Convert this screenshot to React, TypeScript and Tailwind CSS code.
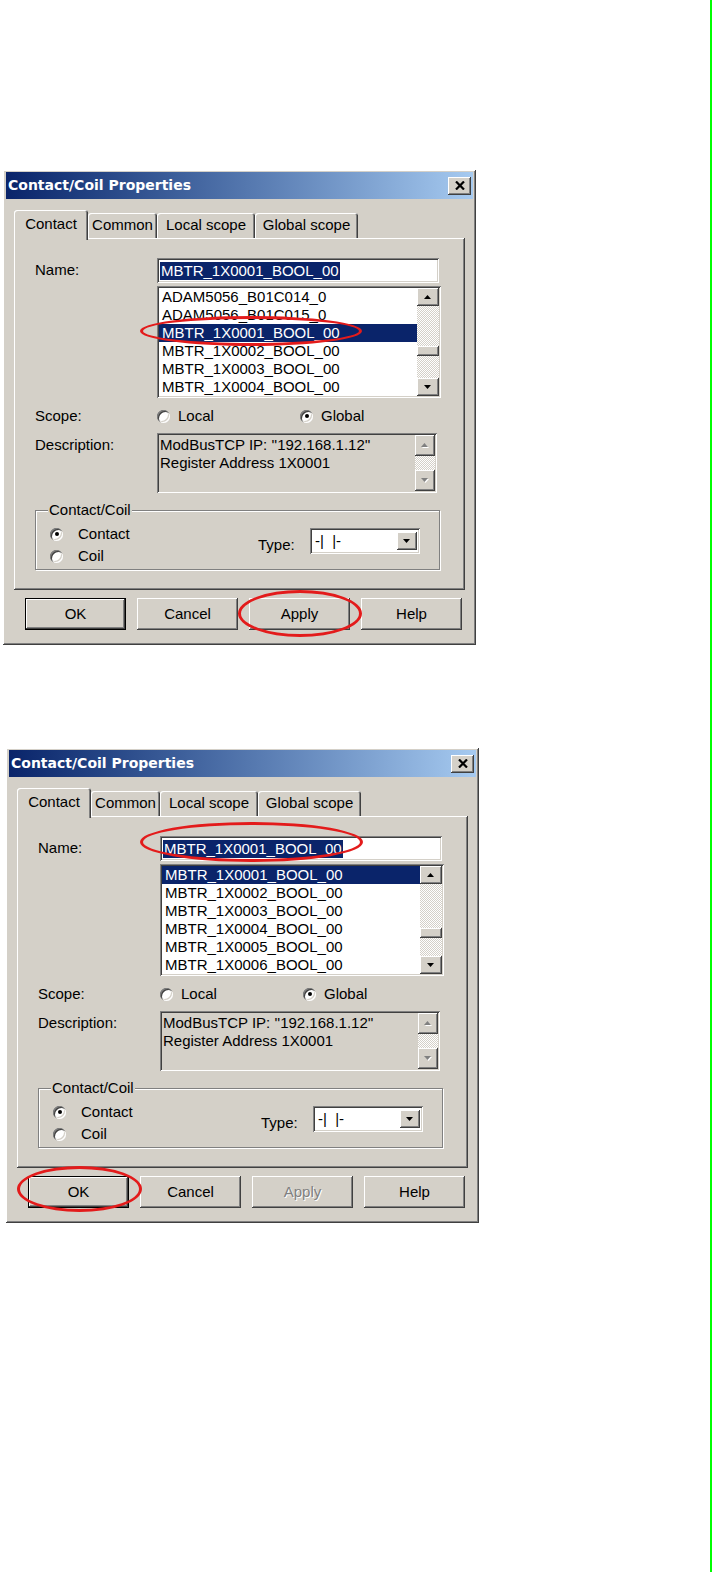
import React from "react";

// Win2000-style 3D edges
const raised =
  "shadow-[inset_-1px_-1px_0_#404040,inset_1px_1px_0_#ffffff,inset_-2px_-2px_0_#808080,inset_2px_2px_0_#d4d0c8]";
const sunken =
  "shadow-[inset_1px_1px_0_#808080,inset_-1px_-1px_0_#ffffff,inset_2px_2px_0_#404040,inset_-2px_-2px_0_#d4d0c8]";
const dither =
  "bg-[repeating-conic-gradient(#ffffff_0_25%,#d4d0c8_0_50%)] bg-[length:2px_2px]";

function Arrow({ dir, disabled }: { dir: "up" | "down"; disabled?: boolean }) {
  const pts = dir === "up" ? "3.5,0 7,4 0,4" : "0,0 7,0 3.5,4";
  return (
    <div className={`flex items-center justify-center bg-[#d4d0c8] ${raised} h-full w-full`}>
      <svg width="8" height="5" viewBox="0 0 8 5">
        {disabled && <polygon points={pts} fill="#ffffff" transform="translate(1,1)" />}
        <polygon points={pts} fill={disabled ? "#808080" : "#000000"} />
      </svg>
    </div>
  );
}

function Radio({ checked }: { checked?: boolean }) {
  return (
    <div className="w-[13px] h-[13px] rounded-full bg-white flex items-center justify-center shadow-[inset_1px_1px_0_#808080,inset_2px_2px_0_#404040,inset_-1px_-1px_0_#ffffff,inset_-2px_-2px_0_#d4d0c8]">
      {checked && <div className="w-[4px] h-[4px] rounded-full bg-black" />}
    </div>
  );
}

// hand-drawn red annotation marks over the screenshot
function Ellipse({ className }: { className: string }) {
  return <div className={`absolute rounded-[50%] border-[3px] border-[#e31b1b] ${className}`} />;
}

const TABS = [
  { label: "Contact", w: "w-[74px]", active: true },
  { label: "Common", w: "w-[69px]" },
  { label: "Local scope", w: "w-[98px]" },
  { label: "Global scope", w: "w-[103px]" },
];

function Dialog({
  rows,
  selected,
  thumbTop,
  applyDisabled,
  className,
  children,
}: {
  rows: string[];
  selected: number;
  thumbTop: string;
  applyDisabled?: boolean;
  className: string;
  children?: React.ReactNode;
}) {
  return (
    <div
      className={`relative w-[473px] h-[475px] bg-[#d4d0c8] px-[3px] pt-[2px] text-[15px] text-black font-['Liberation_Sans',Arial,sans-serif] ${raised} ${className}`}
    >
      {/* title bar */}
      <div className="h-[27px] flex items-center justify-between bg-linear-to-r from-[#0a246a] to-[#a6caf0] pl-[2px] pr-[2px]">
        <span className="text-white font-bold text-[14px] font-['DejaVu_Sans',Verdana,sans-serif]">
          Contact/Coil Properties
        </span>
        <div className={`w-[23px] h-[18px] flex items-center justify-center bg-[#d4d0c8] ${raised}`}>
          <svg width="10" height="9" viewBox="0 0 10 9">
            <path d="M1 0.5 L9 8.5 M9 0.5 L1 8.5" stroke="#000" strokeWidth="2.2" />
          </svg>
        </div>
      </div>

      {/* tabs */}
      <div className="mt-[11px] ml-[8px] h-[28px] flex items-end">
        {TABS.map((t) => (
          <div
            key={t.label}
            className={`${t.w} flex items-center justify-center rounded-t-[3px] bg-[#d4d0c8] shadow-[inset_1px_1px_0_#ffffff,inset_-1px_0_0_#404040,inset_-2px_0_0_#808080] ${
              t.active ? "relative z-10 h-[30px] -mb-[2px] pb-[2px]" : "h-[25px]"
            }`}
          >
            {t.label}
          </div>
        ))}
      </div>

      {/* tab page */}
      <div className={`ml-[8px] w-[451px] h-[352px] pt-[20px] pl-[21px] ${raised}`}>
        <div className="flex items-center h-[25px]">
          <div className="w-[122px]">Name:</div>
          <div className={`w-[282px] h-[25px] bg-white pl-[3px] flex items-center ${sunken}`}>
            <span className="bg-[#0a246a] text-white leading-[18px] px-[1px]">MBTR_1X0001_BOOL_00</span>
          </div>
        </div>

        <div className={`ml-[122px] mt-[3px] w-[284px] h-[112px] bg-white p-[2px] flex ${sunken}`}>
          <div className="flex-1 flex flex-col">
            {rows.map((r, i) => (
              <div
                key={r}
                className={`h-[18px] leading-[18px] pl-[3px] ${i === selected ? "bg-[#0a246a] text-white" : ""}`}
              >
                {r}
              </div>
            ))}
          </div>
          <div className="w-[22px] flex flex-col">
            <div className="h-[18px]">
              <Arrow dir="up" />
            </div>
            <div className={`flex-1 ${dither}`}>
              <div className={`h-[10px] bg-[#d4d0c8] ${raised} ${thumbTop}`} />
            </div>
            <div className="h-[18px]">
              <Arrow dir="down" />
            </div>
          </div>
        </div>

        <div className="mt-[8px] flex items-center h-[20px]">
          <div className="w-[122px]">Scope:</div>
          <div className="w-[143px] flex items-center gap-[8px]">
            <Radio />
            <span>Local</span>
          </div>
          <div className="flex items-center gap-[8px]">
            <Radio checked />
            <span>Global</span>
          </div>
        </div>

        <div className="mt-[7px] flex items-start">
          <div className="w-[122px] pt-[1px]">Description:</div>
          <div className={`w-[280px] h-[60px] bg-[#d4d0c8] p-[2px] flex ${sunken}`}>
            <div className="flex-1 pl-[1px] pt-[1px] leading-[18px]">
              <div>ModBusTCP IP: ''192.168.1.12''</div>
              <div>Register Address 1X0001</div>
            </div>
            <div className="w-[20px] flex flex-col">
              <div className="h-[21px]">
                <Arrow dir="up" disabled />
              </div>
              <div className={`flex-1 ${dither}`} />
              <div className="h-[21px]">
                <Arrow dir="down" disabled />
              </div>
            </div>
          </div>
        </div>

        <div className="relative mt-[17px] w-[405px] h-[60px] border border-[#808080] shadow-[inset_1px_1px_0_#ffffff,1px_1px_0_#ffffff] pl-[14px] pt-[10px] flex items-center">
          <span className="absolute -top-[10px] left-[12px] bg-[#d4d0c8] px-[1px] leading-[18px]">Contact/Coil</span>
          <div className="w-[208px] flex flex-col">
            <div className="h-[22px] flex items-center gap-[15px]">
              <Radio checked />
              <span>Contact</span>
            </div>
            <div className="h-[22px] flex items-center gap-[15px]">
              <Radio />
              <span>Coil</span>
            </div>
          </div>
          <div className="w-[52px]">Type:</div>
          <div className={`w-[110px] h-[26px] bg-white p-[2px] flex -mt-[8px] ${sunken}`}>
            <div className="flex-1 pl-[3px] leading-[22px] whitespace-pre">-|  |-</div>
            <div className="w-[20px] my-[2px] mr-[1px]">
              <Arrow dir="down" />
            </div>
          </div>
        </div>
      </div>

      {/* buttons */}
      <div className="mt-[8px] ml-[19px] flex gap-[11px]">
        <div className={`w-[101px] h-[32px] border border-black flex items-center justify-center bg-[#d4d0c8] ${raised}`}>
          OK
        </div>
        <div className={`w-[101px] h-[32px] flex items-center justify-center bg-[#d4d0c8] ${raised}`}>Cancel</div>
        <div
          className={`w-[101px] h-[32px] flex items-center justify-center bg-[#d4d0c8] ${raised} ${
            applyDisabled ? "text-[#808080] [text-shadow:1px_1px_0_#ffffff]" : ""
          }`}
        >
          Apply
        </div>
        <div className={`w-[101px] h-[32px] flex items-center justify-center bg-[#d4d0c8] ${raised}`}>Help</div>
      </div>

      {children}
    </div>
  );
}

export default function App() {
  return (
    <div className="w-[712px] min-h-[1572px] bg-white border-r-2 border-[#00ff00] pt-[170px]">
      <Dialog
        className="ml-[3px]"
        rows={[
          "ADAM5056_B01C014_0",
          "ADAM5056_B01C015_0",
          "MBTR_1X0001_BOOL_00",
          "MBTR_1X0002_BOOL_00",
          "MBTR_1X0003_BOOL_00",
          "MBTR_1X0004_BOOL_00",
        ]}
        selected={2}
        thumbTop="mt-[40px]"
      >
        <Ellipse className="left-[137px] top-[146px] w-[222px] h-[30px]" />
        <Ellipse className="left-[235px] top-[420px] w-[124px] h-[47px]" />
      </Dialog>
      <Dialog
        className="ml-[6px] mt-[103px]"
        rows={[
          "MBTR_1X0001_BOOL_00",
          "MBTR_1X0002_BOOL_00",
          "MBTR_1X0003_BOOL_00",
          "MBTR_1X0004_BOOL_00",
          "MBTR_1X0005_BOOL_00",
          "MBTR_1X0006_BOOL_00",
        ]}
        selected={0}
        thumbTop="mt-[44px]"
        applyDisabled
      >
        <Ellipse className="left-[134px] top-[74px] w-[223px] h-[40px]" />
        <Ellipse className="left-[11px] top-[418px] w-[125px] h-[46px]" />
      </Dialog>
    </div>
  );
}
